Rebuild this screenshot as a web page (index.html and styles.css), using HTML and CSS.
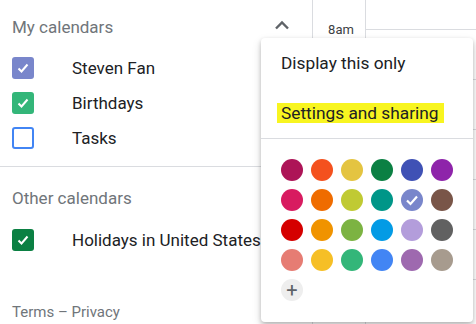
FILE: index.html
```html
<!DOCTYPE html>
<html lang="en">
<head>
    <meta charset="UTF-8">
    <title>Calendar</title>
    <link rel="stylesheet" href="styles.css">
</head>
<body>
    <div class="app">
        <aside class="sidebar">
            <div class="section-head first">
                <span>My calendars</span>
                <svg class="chevron" width="16" height="10" viewBox="0 0 16 10">
                    <polyline points="2,8.5 8,2.5 14,8.5" fill="none" stroke="#5f6368" stroke-width="2.4"/>
                </svg>
            </div>
            <ul class="cal-list">
                <li class="cal-row">
                    <span class="check lavender">
                        <svg width="14" height="14" viewBox="0 0 14 14"><polyline points="2.5,7.5 5.5,10.5 11.5,3.5" fill="none" stroke="#fff" stroke-width="2"/></svg>
                    </span>
                    <span class="cal-name">Steven Fan</span>
                </li>
                <li class="cal-row">
                    <span class="check sage">
                        <svg width="14" height="14" viewBox="0 0 14 14"><polyline points="2.5,7.5 5.5,10.5 11.5,3.5" fill="none" stroke="#fff" stroke-width="2"/></svg>
                    </span>
                    <span class="cal-name">Birthdays</span>
                </li>
                <li class="cal-row">
                    <span class="check empty"></span>
                    <span class="cal-name">Tasks</span>
                </li>
            </ul>

            <div class="section-head second">
                <span>Other calendars</span>
            </div>
            <ul class="cal-list">
                <li class="cal-row">
                    <span class="check basil">
                        <svg width="14" height="14" viewBox="0 0 14 14"><polyline points="2.5,7.5 5.5,10.5 11.5,3.5" fill="none" stroke="#fff" stroke-width="2"/></svg>
                    </span>
                    <span class="cal-name">Holidays in United States</span>
                </li>
            </ul>

            <div class="footer">Terms &ndash; Privacy</div>
        </aside>

        <div class="times">
            <span class="hour-label">8am</span>
        </div>

        <div class="grid">
            <div class="hour"></div>
            <div class="hour"></div>
            <div class="hour"></div>
            <div class="hour"></div>
            <div class="hour"></div>
            <div class="hour"></div>
        </div>
    </div>

    <div class="menu">
        <div class="menu-items">
            <div class="menu-item">Display this only</div>
            <div class="menu-item"><span class="marked">Settings and sharing</span></div>
        </div>
        <div class="swatches" id="swatches"></div>
    </div>

    <script>
        const colors = [
            '#ad1457', '#f4511e', '#e4c441', '#0b8043', '#3f51b5', '#8e24aa',
            '#d81b60', '#ef6c00', '#c0ca33', '#009688', '#7986cb', '#795548',
            '#d50000', '#f09300', '#7cb342', '#039be5', '#b39ddb', '#616161',
            '#e67c73', '#f6bf26', '#33b679', '#4285f4', '#9e69af', '#a79b8e'
        ];
        const swatches = document.getElementById('swatches');

        colors.forEach(function(color) {
            const dot = document.createElement('span');
            dot.className = 'swatch';
            dot.style.background = color;
            if (color === '#7986cb') {
                dot.innerHTML = '<svg width="14" height="14" viewBox="0 0 14 14"><polyline points="2,7.5 5.5,11 12,3.5" fill="none" stroke="#fff" stroke-width="2.2"/></svg>';
            }
            swatches.appendChild(dot);
        });

        const add = document.createElement('span');
        add.className = 'swatch add';
        add.textContent = '+';
        swatches.appendChild(add);
    </script>
</body>
</html>
```

FILE: styles.css
```css
body {
    margin: 0;
    width: 476px;
    height: 324px;
    overflow: hidden;
    background: #fff;
    font-family: Roboto, "Liberation Sans", sans-serif;
    color: #3c4043;
}

.app {
    display: flex;
    height: 324px;
}

.sidebar {
    width: 312px;
    flex-shrink: 0;
    border-right: 1px solid #dadce0;
    display: flex;
    flex-direction: column;
}

.section-head {
    display: flex;
    align-items: center;
    justify-content: space-between;
    padding-left: 12px;
    padding-right: 22px;
    font-size: 17px;
    color: #70757a;
}

.section-head.first {
    height: 46px;
    padding-top: 4px;
}

.section-head.second {
    height: 48px;
    padding-top: 7px;
    border-top: 1px solid #dadce0;
}

.chevron {
    margin-top: -4px;
}

.cal-list {
    list-style: none;
    margin: 0;
    padding: 0;
}

.cal-list:first-of-type {
    padding-bottom: 11px;
}

.cal-row {
    display: flex;
    align-items: center;
    height: 35px;
    padding-left: 12px;
    white-space: nowrap;
}

.check {
    width: 22px;
    height: 22px;
    border-radius: 3px;
    box-sizing: border-box;
    display: flex;
    align-items: center;
    justify-content: center;
    margin-right: 38px;
    flex-shrink: 0;
}

.check.lavender { background: #7986cb; }
.check.sage { background: #33b679; }
.check.basil { background: #0b8043; }
.check.empty { border: 2px solid #4285f4; }

.cal-name {
    font-size: 17px;
    color: #202124;
}

.footer {
    margin-top: auto;
    height: 24px;
    padding-left: 12px;
    font-size: 15px;
    color: #70757a;
    line-height: 24px;
}

.times {
    width: 52px;
    flex-shrink: 0;
    border-right: 1px solid #dadce0;
    text-align: center;
}

.hour-label {
    display: block;
    margin-top: 22px;
    padding-left: 4px;
    font-size: 13px;
    line-height: 16px;
    color: #3c4043;
}

.grid {
    flex: 1;
    padding-top: 29px;
}

.hour {
    height: 49px;
    border-top: 1px solid #dadce0;
}

.menu {
    position: absolute;
    left: 261px;
    top: 38px;
    width: 212px;
    height: 284px;
    background: #fff;
    border-radius: 4px;
    box-shadow: 0 2px 4px rgba(0, 0, 0, 0.2), 0 4px 10px rgba(0, 0, 0, 0.15);
}

.menu-items {
    border-bottom: 1px solid #dadce0;
}

.menu-item {
    height: 50px;
    display: flex;
    align-items: center;
    padding-left: 20px;
    font-size: 17.3px;
    color: #202124;
}

.marked {
    background: #f8f520;
    padding: 0 5px 0 4px;
    margin-left: -4px;
    line-height: 20px;
}

.swatches {
    display: grid;
    grid-template-columns: repeat(6, 22px);
    gap: 8px;
    padding: 20px 0 0 20px;
}

.swatch {
    width: 22px;
    height: 22px;
    border-radius: 50%;
    display: flex;
    align-items: center;
    justify-content: center;
}

.swatch.add {
    background: #eeeeee;
    color: #5f6368;
    font-size: 20px;
    line-height: 22px;
}
```
